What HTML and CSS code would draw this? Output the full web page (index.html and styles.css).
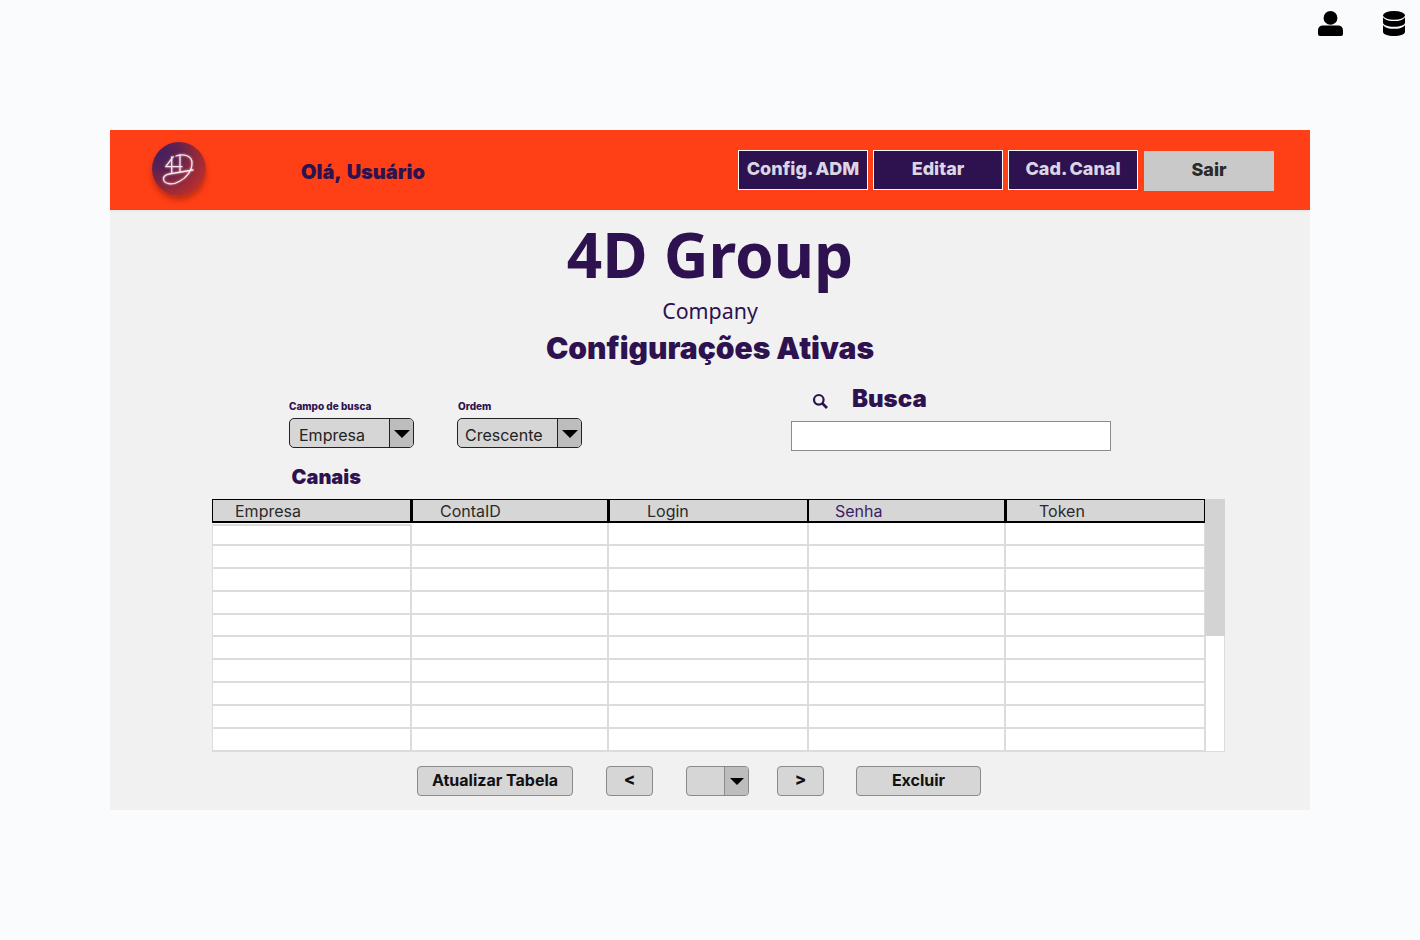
FILE: index.html
```html
<!DOCTYPE html>
<html lang="pt">
<head>
<meta charset="utf-8">
<title>4D Group</title>
<link rel="stylesheet" href="styles.css">
</head>
<body>
<div class="top-icons">
  <svg class="ico-user" viewBox="0 0 26 26" preserveAspectRatio="none"><circle cx="13" cy="7.200" r="7.200"/><path d="M5 15h16a5 5 0 0 1 5 5V24a2 2 0 0 1-2 2H2a2 2 0 0 1-2-2v-4a5 5 0 0 1 5-5z"/></svg>
  <svg class="ico-db" viewBox="0 0 24 26" preserveAspectRatio="none"><ellipse cx="12" cy="4.500" rx="12" ry="4.500"/><path d="M0 6.500C2 9.500 7 10.500 12 10.500s10-1 12-4v5.500c0 2.500-5 4.500-12 4.500S0 14.500 0 12z"/><path d="M0 14.500c2 3 7 4 12 4s10-1 12-4v7c0 2.500-5 4.500-12 4.500S0 24 0 21.500z"/></svg>
</div>
<main class="panel">
  <header class="bar">
    <div class="logo">
      <svg viewBox="0 0 54 54" fill="none"><g stroke="#f8e6ea" stroke-width="1.300" stroke-linecap="round" stroke-linejoin="round"><path d="M21.300 14.700 13.700 24.700H30M19.700 15V31"/><path d="M24 14C32 11 40 14 40 21C40 29 34 36 28 39C22 43 12 43 11.500 37C11 33 17 31.500 23 31C29 30 35 29 41 28"/><path d="M28 13V30"/></g></svg>
    </div>
    <div class="hello">Olá, Usuário</div>
    <nav class="nav">
      <a class="nav-btn">Config. ADM</a>
      <a class="nav-btn">Editar</a>
      <a class="nav-btn">Cad. Canal</a>
      <a class="nav-exit">Sair</a>
    </nav>
  </header>
  <section class="content">
    <h1 class="title">4D Group</h1>
    <p class="company">Company</p>
    <h2 class="subtitle">Configurações Ativas</h2>
    <div class="filters">
      <div class="field field-a">
        <label class="mini">Campo de busca</label>
        <div class="select select-a"><span class="sel-text">Empresa</span><span class="arrow"><i></i></span></div>
      </div>
      <div class="field field-b">
        <label class="mini mini-b">Ordem</label>
        <div class="select select-b"><span class="sel-text">Crescente</span><span class="arrow"><i></i></span></div>
      </div>
      <div class="search">
        <div class="search-head">
          <svg viewBox="0 0 16 16" fill="none" stroke="#2e124f"><circle cx="6.800" cy="6.800" r="4.800" stroke-width="2.200"/><path d="M10.500 10.500 15 15" stroke-width="2.600"/></svg>
          <span>Busca</span>
        </div>
        <div class="search-box"></div>
      </div>
    </div>
    <h3 class="canais">Canais</h3>
    <div class="table-wrap">
      <div class="table">
        <div class="th th-1">Empresa</div>
        <div class="th th-2">ContaID</div>
        <div class="th th-3">Login</div>
        <div class="th th-4">Senha</div>
        <div class="th th-5">Token</div>
        <div class="td first"></div><div class="td"></div><div class="td"></div><div class="td"></div><div class="td"></div>
        <div class="td"></div><div class="td"></div><div class="td"></div><div class="td"></div><div class="td"></div>
        <div class="td"></div><div class="td"></div><div class="td"></div><div class="td"></div><div class="td"></div>
        <div class="td"></div><div class="td"></div><div class="td"></div><div class="td"></div><div class="td"></div>
        <div class="td"></div><div class="td"></div><div class="td"></div><div class="td"></div><div class="td"></div>
        <div class="td"></div><div class="td"></div><div class="td"></div><div class="td"></div><div class="td"></div>
        <div class="td"></div><div class="td"></div><div class="td"></div><div class="td"></div><div class="td"></div>
        <div class="td"></div><div class="td"></div><div class="td"></div><div class="td"></div><div class="td"></div>
        <div class="td"></div><div class="td"></div><div class="td"></div><div class="td"></div><div class="td"></div>
        <div class="td"></div><div class="td"></div><div class="td"></div><div class="td"></div><div class="td"></div>
      </div>
      <div class="scroll"><div class="thumb"></div></div>
    </div>
    <div class="actions">
      <button class="btn btn-update">Atualizar Tabela</button>
      <button class="btn btn-page">&lt;</button>
      <div class="pager"><span class="pager-val"></span><span class="pager-arrow"><i></i></span></div>
      <button class="btn btn-page">&gt;</button>
      <button class="btn btn-del">Excluir</button>
    </div>
  </section>
</main>
</body>
</html>
```

FILE: styles.css
```css
* { box-sizing: border-box; }
html, body { margin: 0; height: 940px; overflow: hidden; }
body { background: #fafbfd; font-family: Inter, "Liberation Sans", sans-serif; color: #2e124f; }

.top-icons { height: 130px; display: flex; justify-content: flex-end; align-items: flex-start; padding: 11px 15px 0 0; gap: 40px; }
.ico-user { width: 25px; height: 25px; display: block; fill: #000; }
.ico-db { width: 22px; height: 25px; display: block; fill: #000; }

.panel { width: 1200px; height: 680px; margin-left: 110px; background: #f1f1f1; }

.bar { height: 80px; background: #ff3f15; display: flex; align-items: flex-start; box-shadow: 0 1px 2px rgba(0,0,0,.06); position: relative; }
.logo { width: 54px; height: 54px; margin: 12px 0 0 42px; border-radius: 50%; background: radial-gradient(circle at 18% 22%, #45205f 0, #5c2150 26%, #93293a 58%, #de351d 100%); box-shadow: 0 4px 5px rgba(120,25,10,.45); flex: none; }
.logo svg { width: 54px; height: 54px; display: block; filter: drop-shadow(0 0 1px rgba(255,220,230,.7)); }
.hello { margin: 30px 0 0 95px; font-size: 20px; line-height: 24px; font-weight: 900; width: 260px; word-spacing: 2px; }
.nav { display: flex; margin: 20px 0 0 177px; gap: 5px; }
.nav-btn { width: 130px; height: 40px; border: 1px solid #fff; background: #2e124f; color: #dcd5e2; font-size: 18px; font-weight: 800; display: flex; align-items: center; justify-content: center; padding-bottom: 4px; white-space: pre; word-spacing: -1px; }
.nav-exit { width: 130px; height: 40px; margin: 1px 0 0 1px; background: #c9c9c9; color: #2a2a2a; font-size: 18px; font-weight: 800; display: flex; align-items: center; justify-content: center; padding-bottom: 4px; }

.content { display: flex; flex-direction: column; position: relative; }
.title { margin: 8px 0 0; font-family: "Noto Sans", sans-serif; font-size: 62px; line-height: 72px; font-weight: 700; text-align: center; }
.company { margin: 6px 0 0; font-family: "Noto Sans", sans-serif; font-size: 21.400px; line-height: 30px; text-align: center; }
.subtitle { margin: 1px 0 0; font-size: 30px; line-height: 42px; font-weight: 900; text-align: center; }

.filters { height: 83px; margin-top: 13px; display: flex; align-items: flex-start; }
.field { width: 125px; }
.field-a { margin: 18px 0 0 179px; }
.field-b { margin: 18px 0 0 43px; }
.mini { display: block; font-size: 10px; line-height: 12px; font-weight: 800; margin-bottom: 6px; white-space: nowrap; }
.mini-b { margin-left: 1px; }
.select { height: 30px; width: 125px; border: 1px solid #222; border-radius: 5px; background: #d6d6d6; display: flex; overflow: hidden; color: #222; font-size: 16px; }
.sel-text { flex: 1; line-height: 32px; padding-left: 9px; }
.select-b .sel-text { padding-left: 7px; }
.arrow { width: 24px; background: #bdbdbd; border-left: 1px solid #222; display: flex; justify-content: center; padding-top: 11px; }
.arrow i { width: 0; height: 0; border-left: 8px solid transparent; border-right: 8px solid transparent; border-top: 8px solid #000; }
.search { margin-left: 209px; width: 320px; }
.search-head { height: 38px; display: flex; align-items: center; font-size: 24px; font-weight: 900; padding-left: 22px; }
.search-head svg { width: 16px; height: 16px; margin: -1px 22px 0 -1px; flex: none; }
.search-head span { line-height: 30px; margin-top: -5px; margin-left: 2px; }
.search-box { height: 30px; margin-top: 1px; background: #fff; border: 1px solid #8c8c8c; }

.canais { margin: 0 0 0 181.500px; font-size: 20px; line-height: 25px; font-weight: 900; height: 26px; }

.table-wrap { display: flex; margin: 8px 0 0 102px; width: 1013px; height: 253px; }
.table { width: 993px; display: grid; grid-template-columns: 199px 197px 200px 197px 200px; grid-template-rows: 24px repeat(10, 1fr); background: #fff; }
.th { background: #d6d6d6; border: 1px solid #000; border-left-width: 2px; border-bottom-width: 2px; color: #2a2a2a; font-size: 16px; line-height: 23px; white-space: nowrap; }
.th-1 { padding-left: 22px; border-left-width: 1px; }
.th-2 { padding-left: 27px; }
.th-3 { padding-left: 37px; }
.th-4 { padding-left: 26px; color: #3b2163; border-left-width: 1px; }
.th-5 { padding-left: 32px; }
.td { border-right: 2px solid #dcdcdc; border-bottom: 2px solid #dcdcdc; margin-right: -1px; }
.td:nth-child(5n+6) { border-left: 1px solid #dcdcdc; }
.td.first { border-top: 2px solid #dcdcdc; margin-top: 1px; }
.scroll { width: 20px; background: #fff; border-right: 1px solid #dcdcdc; border-bottom: 1px solid #dcdcdc; border-left: 1px solid #dcdcdc; }
.thumb { width: 20px; height: 137px; margin-left: -1px; background: #d3d3d3; }

.actions { display: flex; align-items: flex-start; margin: 14px 0 0 307px; }
.btn { height: 30px; border: 1px solid #8a8a8a; border-radius: 4px; background: #d6d6d6; color: #111; font: 700 16px/1 Inter, "Liberation Sans", sans-serif; padding: 0 0 3px; }
.btn-update { width: 156px; margin-right: 33px; }
.btn-page { width: 47px; font-size: 17px; font-weight: 800; }
.pager { width: 63px; height: 30px; margin: 0 28px 0 33px; border: 1px solid #8a8a8a; border-radius: 4px; background: #d6d6d6; display: flex; overflow: hidden; }
.pager-val { flex: 1; }
.pager-arrow { width: 24px; background: #bdbdbd; border-left: 1px solid #8a8a8a; display: flex; justify-content: center; padding-top: 11px; }
.pager-arrow i { width: 0; height: 0; border-left: 7px solid transparent; border-right: 7px solid transparent; border-top: 7px solid #000; }
.btn-del { width: 125px; margin-left: 32px; }
```
